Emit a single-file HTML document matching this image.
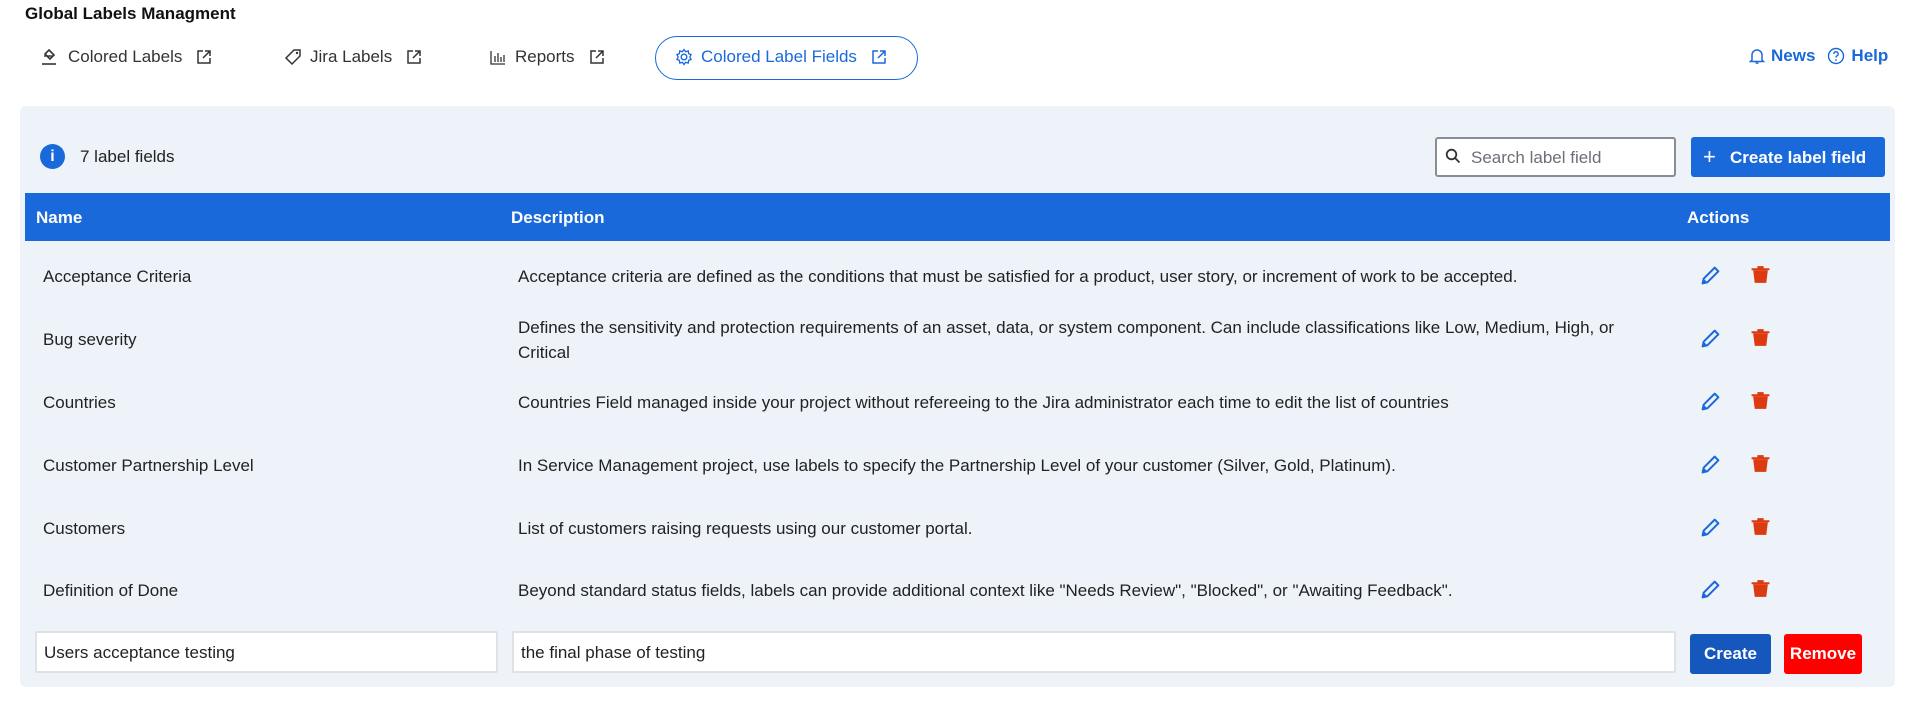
<!DOCTYPE html>
<html><head><meta charset="utf-8"><style>
*{box-sizing:border-box;margin:0;padding:0}
body{width:1916px;height:711px;background:#fff;font-family:"Liberation Sans",sans-serif;color:#172b4d;position:relative;overflow:hidden}
.a{position:absolute;white-space:nowrap}
.tab{position:absolute;top:47px;font-size:17px;color:#333;display:flex;align-items:center;gap:8px}
.tab svg{flex:none}
.panel{position:absolute;left:20px;top:106px;width:1875px;height:581px;background:#eef3fa;border-radius:6px}
.hdr{position:absolute;left:25px;top:193px;width:1865px;height:48px;background:#1a69db;color:#fff;font-weight:bold;font-size:17px}
.row{position:absolute;left:0;width:1916px;font-size:17px;color:#222;line-height:25px}
.row .n{position:absolute;left:43px}
.row .d{position:absolute;left:518px;width:1150px;white-space:normal;line-height:25px}
.ic{position:absolute}
</style></head><body>
<div class="a" style="left:25px;top:4px;font-size:17px;font-weight:bold;color:#111">Global Labels Managment</div>

<div class="tab" style="left:40px"><svg width="20" height="18" viewBox="0 0 20 18"><path d="M9 2l5 5-4 4-5-5z" fill="none" stroke="#333" stroke-width="1.6"/><path d="M4 8h9" stroke="#333" stroke-width="1.4"/><path d="M2 16h14" stroke="#333" stroke-width="1.6"/></svg><span>Colored Labels</span><svg width="16" height="16" viewBox="0 0 16 16" style="margin-left:6px"><path d="M7 2H2v12h12V9M9 2h5v5M14 2L7 9" fill="none" stroke="#333" stroke-width="1.5"/></svg></div>
<div class="tab" style="left:284px"><svg width="18" height="18" viewBox="0 0 18 18"><path d="M10 2h6v6l-8 8-6-6z" fill="none" stroke="#333" stroke-width="1.5"/><circle cx="13" cy="5" r="1.2" fill="#333"/></svg><span>Jira Labels</span><svg width="16" height="16" viewBox="0 0 16 16" style="margin-left:6px"><path d="M7 2H2v12h12V9M9 2h5v5M14 2L7 9" fill="none" stroke="#333" stroke-width="1.5"/></svg></div>
<div class="tab" style="left:489px"><svg width="18" height="18" viewBox="0 0 18 18"><path d="M2 3v13h14M6 14V8M9 14V5M12 14V9M15 14V7" fill="none" stroke="#333" stroke-width="1.3"/></svg><span>Reports</span><svg width="16" height="16" viewBox="0 0 16 16" style="margin-left:6px"><path d="M7 2H2v12h12V9M9 2h5v5M14 2L7 9" fill="none" stroke="#333" stroke-width="1.5"/></svg></div>
<div class="a" style="left:655px;top:36px;width:263px;height:44px;border:1.5px solid #1a69db;border-radius:22px"></div>
<div class="tab" style="left:675px;color:#1a69db"><svg width="18" height="18" viewBox="0 0 18 18"><circle cx="9" cy="9" r="2.8" fill="none" stroke="#1a69db" stroke-width="1.4"/><path d="M9 1.5l1.6 2.2 2.6-.8.4 2.7 2.5 1-1.3 2.4 1.3 2.4-2.5 1-.4 2.7-2.6-.8L9 16.5l-1.6-2.2-2.6.8-.4-2.7-2.5-1L3.2 9 1.9 6.6l2.5-1 .4-2.7 2.6.8z" fill="none" stroke="#1a69db" stroke-width="1.3"/></svg><span>Colored Label Fields</span><svg width="16" height="16" viewBox="0 0 16 16" style="margin-left:6px"><path d="M7 2H2v12h12V9M9 2h5v5M14 2L7 9" fill="none" stroke="#1a69db" stroke-width="1.5"/></svg></div>

<div class="a" style="left:1749px;top:46px;font-size:17px;font-weight:bold;color:#1a69db;display:flex;align-items:center;gap:6px"><svg width="16" height="18" viewBox="0 0 16 18"><path d="M3 13V8a5 5 0 0110 0v5l1.5 1.5h-13z" fill="none" stroke="#1a69db" stroke-width="1.5"/><path d="M6.5 16h3" stroke="#1a69db" stroke-width="1.5"/></svg>News<svg width="18" height="18" viewBox="0 0 18 18" style="margin-left:6px"><circle cx="9" cy="9" r="7.5" fill="none" stroke="#1a69db" stroke-width="1.4"/><path d="M6.8 7a2.2 2.2 0 114 1.2c-.9.6-1.8 1-1.8 2.3" fill="none" stroke="#1a69db" stroke-width="1.4"/><circle cx="9" cy="13" r=".9" fill="#1a69db"/></svg>Help</div>

<div class="panel"></div>
<div class="a" style="left:40px;top:144px;width:25px;height:25px;border-radius:50%;background:#1a69db;color:#fff;font-weight:bold;font-size:16px;text-align:center;line-height:25px">i</div>
<div class="a" style="left:80px;top:147px;font-size:17px;color:#222">7 label fields</div>

<div class="a" style="left:1435px;top:137px;width:241px;height:40px;border:2px solid #888d96;border-radius:3px;background:#fff"></div>
<svg class="ic" style="left:1445px;top:148px" width="16" height="16" viewBox="0 0 16 16"><circle cx="6.5" cy="6.5" r="4.8" fill="none" stroke="#333" stroke-width="1.8"/><path d="M10 10l4.5 4.5" stroke="#333" stroke-width="1.8"/></svg>
<div class="a" style="left:1471px;top:148px;font-size:17px;color:#6b6f76">Search label field</div>
<div class="a" style="left:1691px;top:137px;width:194px;height:40px;background:#1a69db;border-radius:3px;color:#fff;font-weight:bold;font-size:17px;line-height:40px;padding-left:12px"><span style="font-size:22px;font-weight:normal;vertical-align:-1px">+</span>&nbsp;&nbsp;&nbsp;Create label field</div>

<div class="hdr"><span class="a" style="left:11px;top:15px">Name</span><span class="a" style="left:486px;top:15px">Description</span><span class="a" style="left:1662px;top:15px">Actions</span></div>

<div class="row" style="top:264px"><span class="n">Acceptance Criteria</span><span class="d">Acceptance criteria are defined as the conditions that must be satisfied for a product, user story, or increment of work to be accepted.</span></div>
<div class="row" style="top:315px"><span class="n" style="top:12px">Bug severity</span><span class="d">Defines the sensitivity and protection requirements of an asset, data, or system component. Can include classifications like Low, Medium, High, or Critical</span></div>
<div class="row" style="top:390px"><span class="n">Countries</span><span class="d">Countries Field managed inside your project without refereeing to the Jira administrator each time to edit the list of countries</span></div>
<div class="row" style="top:453px"><span class="n">Customer Partnership Level</span><span class="d">In Service Management project, use labels to specify the Partnership Level of your customer (Silver, Gold, Platinum).</span></div>
<div class="row" style="top:516px"><span class="n">Customers</span><span class="d">List of customers raising requests using our customer portal.</span></div>
<div class="row" style="top:578px"><span class="n">Definition of Done</span><span class="d">Beyond standard status fields, labels can provide additional context like "Needs Review", "Blocked", or "Awaiting Feedback".</span></div>

<svg width="0" height="0" style="position:absolute"><defs>
<symbol id="pen" viewBox="0 0 20 20"><path d="M14 2.5l3.5 3.5L7 16.5 2.5 17.5 3.5 13z" fill="none" stroke="#1a69db" stroke-width="1.9" stroke-linejoin="round"/><path d="M2.5 17.5L3.5 13 7 16.5z" fill="#1a69db"/></symbol>
<symbol id="bin" viewBox="0 0 20 20"><path d="M1.5 4h17v2h-17z M7 2h6v2H7z" fill="#dc3a10"/><path d="M3 6h14l-1.5 12h-11z" fill="#dc3a10"/></symbol>
</defs></svg>
<svg class="ic" style="left:1700px;top:265px" width="21" height="21"><use href="#pen"/></svg><svg class="ic" style="left:1750px;top:264px" width="21" height="21"><use href="#bin"/></svg>
<svg class="ic" style="left:1700px;top:328px" width="21" height="21"><use href="#pen"/></svg><svg class="ic" style="left:1750px;top:327px" width="21" height="21"><use href="#bin"/></svg>
<svg class="ic" style="left:1700px;top:391px" width="21" height="21"><use href="#pen"/></svg><svg class="ic" style="left:1750px;top:390px" width="21" height="21"><use href="#bin"/></svg>
<svg class="ic" style="left:1700px;top:454px" width="21" height="21"><use href="#pen"/></svg><svg class="ic" style="left:1750px;top:453px" width="21" height="21"><use href="#bin"/></svg>
<svg class="ic" style="left:1700px;top:517px" width="21" height="21"><use href="#pen"/></svg><svg class="ic" style="left:1750px;top:516px" width="21" height="21"><use href="#bin"/></svg>
<svg class="ic" style="left:1700px;top:579px" width="21" height="21"><use href="#pen"/></svg><svg class="ic" style="left:1750px;top:578px" width="21" height="21"><use href="#bin"/></svg>

<div class="a" style="left:35px;top:631px;width:463px;height:42px;background:#fff;border:2px solid #dfe1e6;border-radius:2px;font-size:17px;color:#222;padding:10px 0 0 7px">Users acceptance testing</div>
<div class="a" style="left:512px;top:631px;width:1164px;height:42px;background:#fff;border:2px solid #dfe1e6;border-radius:2px;font-size:17px;color:#222;padding:10px 0 0 7px">the final phase of testing</div>
<div class="a" style="left:1690px;top:634px;width:81px;height:40px;background:#1557bd;border-radius:3px;color:#fff;font-weight:bold;font-size:17px;text-align:center;line-height:40px">Create</div>
<div class="a" style="left:1784px;top:634px;width:78px;height:40px;background:#ff0000;border-radius:3px;color:#fff;font-weight:bold;font-size:17px;text-align:center;line-height:40px">Remove</div>
</body></html>
